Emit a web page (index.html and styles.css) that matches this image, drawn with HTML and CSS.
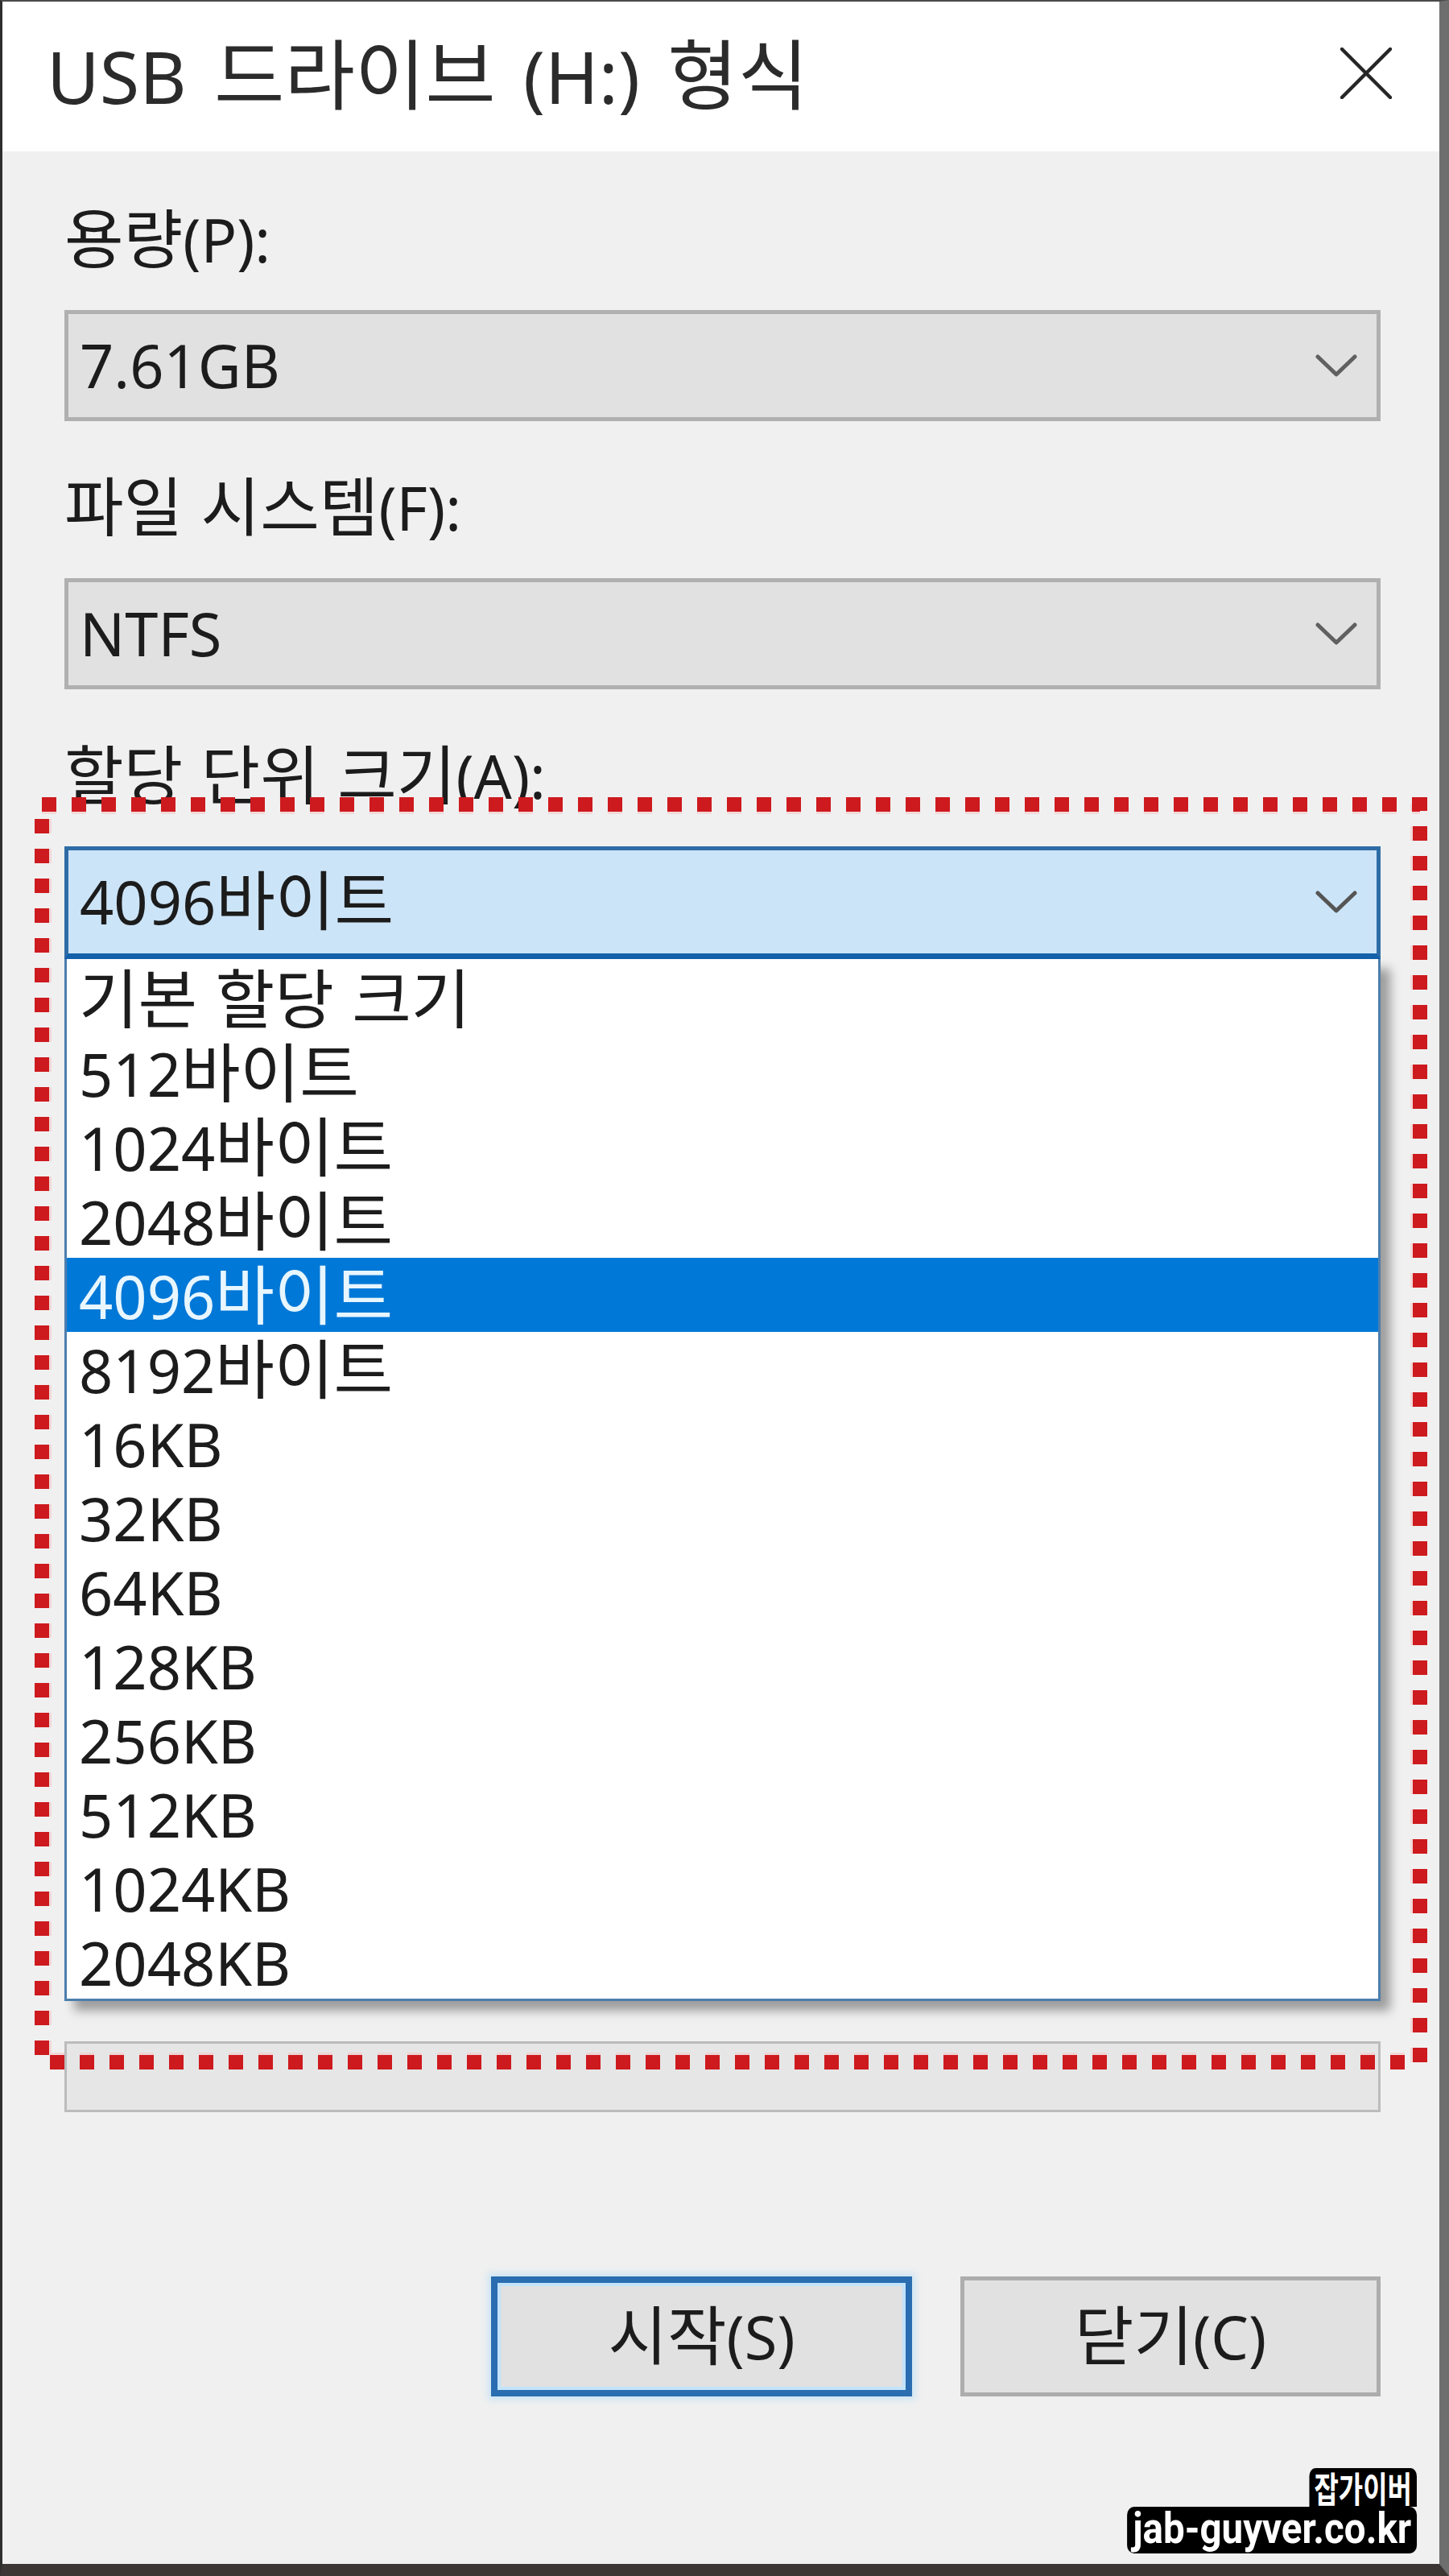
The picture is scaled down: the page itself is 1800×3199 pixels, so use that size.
FILE: index.html
```html
<!DOCTYPE html>
<html lang="ko">
<head>
<meta charset="utf-8">
<title>USB 드라이브 (H:) 형식</title>
<link rel="stylesheet" href="styles.css">
</head>
<body>
<div class="window">
  <header class="titlebar">
    <span class="title">USB <span class="ko">드라이브</span> (H:) <span class="ko">형식</span></span>
    <svg class="close" width="64" height="64" viewBox="0 0 64 64" aria-label="닫기"><path d="M2 2 L62 62 M62 2 L2 62" stroke="#262626" stroke-width="4.5" stroke-linecap="round" fill="none"/></svg>
  </header>
  <main class="content">
    <div class="label"><span class="ko">용량</span>(P):</div>
    <div class="combo">
      <span class="value">7.61GB</span>
      <svg class="chev" width="52" height="28" viewBox="0 0 52 28"><path d="M3 3 L26 25 L49 3" stroke="#606060" stroke-width="5" stroke-linecap="round" stroke-linejoin="round" fill="none"/></svg>
    </div>
    <div class="label"><span class="ko">파일 시스템</span>(F):</div>
    <div class="combo">
      <span class="value">NTFS</span>
      <svg class="chev" width="52" height="28" viewBox="0 0 52 28"><path d="M3 3 L26 25 L49 3" stroke="#606060" stroke-width="5" stroke-linecap="round" stroke-linejoin="round" fill="none"/></svg>
    </div>
    <div class="label"><span class="ko">할당 단위 크기</span>(A):</div>
    <div class="field-open">
      <div class="combo combo-focus">
        <span class="value">4096<span class="ko">바이트</span></span>
        <svg class="chev" width="52" height="28" viewBox="0 0 52 28"><path d="M3 3 L26 25 L49 3" stroke="#555555" stroke-width="5" stroke-linecap="round" stroke-linejoin="round" fill="none"/></svg>
      </div>
      <ul class="dropdown">
        <li><span class="ko">기본 할당 크기</span></li>
        <li>512<span class="ko">바이트</span></li>
        <li>1024<span class="ko">바이트</span></li>
        <li>2048<span class="ko">바이트</span></li>
        <li class="selected">4096<span class="ko">바이트</span></li>
        <li>8192<span class="ko">바이트</span></li>
        <li>16KB</li>
        <li>32KB</li>
        <li>64KB</li>
        <li>128KB</li>
        <li>256KB</li>
        <li>512KB</li>
        <li>1024KB</li>
        <li>2048KB</li>
      </ul>
    </div>
    <div class="progress"></div>
    <div class="buttons">
      <button class="btn btn-default"><span class="ko">시작</span>(S)</button>
      <button class="btn"><span class="ko">닫기</span>(C)</button>
    </div>
  </main>
</div>
<svg class="annotation" width="1730" height="1580" viewBox="0 0 1730 1580">
  <rect x="9" y="9" width="1712" height="1562" fill="none" stroke="#f3c2c2" stroke-width="24" stroke-dasharray="18 19" opacity="0.5"/>
  <rect x="9" y="9" width="1712" height="1562" fill="none" stroke="#cd1a1e" stroke-width="18" stroke-dasharray="18 19"/>
</svg>
<div class="watermark">
  <span class="wm-name">잡가이버</span>
  <span class="wm-url">jab-guyver.co.kr</span>
</div>
</body>
</html>
```
FILE: styles.css
```css
* { box-sizing: border-box; }
html, body { margin: 0; padding: 0; }
body {
  width: 1800px;
  height: 3199px;
  overflow: hidden;
  position: relative;
  background: #3a3a3a;
  font-family: "Noto Sans", "Noto Sans CJK KR", sans-serif;
}
.ko {
  font-family: "Noto Sans CJK KR", "Noto Sans", sans-serif;
  line-height: 0;
}
.window {
  width: 1800px;
  height: 3199px;
  border-style: solid;
  border-width: 2px 12px 15px 3px;
  border-color: #4a4a4a #6e6e6e #3b3533 #2e2e2e;
  background: #f0f0f0;
  display: flex;
  flex-direction: column;
}
.titlebar {
  height: 186px;
  flex: none;
  background: #ffffff;
  display: flex;
  align-items: center;
  justify-content: space-between;
  padding: 0 59px 2px 55px;
}
.title {
  font-size: 90px;
  line-height: 90px;
  word-spacing: 11px;
  color: #2b2b2b;
  white-space: nowrap;
}
.title .ko { font-size: 95px; }
.close { display: block; margin-bottom: 6px; }
.content {
  padding: 60px 73px 0 77px;
  color: #1c1c1c;
  font-size: 74px;
}
.content .ko { font-size: 80px; }
.label {
  height: 100px;
  line-height: 100px;
  margin-bottom: 37px;
  white-space: nowrap;
}
.combo {
  height: 138px;
  border: 5px solid #b0b0b0;
  background: #e1e1e1;
  display: flex;
  align-items: center;
  justify-content: space-between;
  padding: 0 24px 0 14px;
  margin-bottom: 58px;
  line-height: 90px;
  white-space: nowrap;
}
.chev { display: block; flex: none; }
.combo-focus {
  height: 140px;
  border-color: #2f6ca6;
  border-bottom: 7px solid #1461ab;
  background: #cce4f7;
  margin-bottom: 0;
}
.field-open { position: relative; }
.dropdown {
  position: absolute;
  top: 100%;
  left: 0;
  right: 0;
  margin: 0;
  padding: 3px 0 0 0;
  list-style: none;
  background: #ffffff;
  border: 3px solid #4d7eae;
  border-top: 0;
  box-shadow: 12px 12px 12px rgba(0, 0, 0, 0.35);
  z-index: 2;
}
.dropdown li {
  height: 92px;
  line-height: 92px;
  padding: 2px 0 0 15px;
  white-space: nowrap;
  color: #1c1c1c;
}
.dropdown li.selected {
  background: #0078d7;
  color: #e8f6ff;
}
.progress {
  margin-top: 1344px;
  height: 88px;
  background: #e6e6e6;
  border: 3px solid #bcbcbc;
}
.buttons {
  margin-top: 204px;
  display: flex;
  justify-content: flex-end;
  gap: 60px;
}
.btn {
  width: 522px;
  height: 149px;
  font: inherit;
  font-size: 74px;
  line-height: 90px;
  color: #1c1c1c;
  background: #e1e1e1;
  border: 5px solid #adadad;
  padding: 0;
  margin: 0;
}
.btn-default {
  width: 523px;
  border: 8px solid #2a6db0;
  box-shadow: inset 0 0 0 4px #c2e3fa, 0 0 8px 4px rgba(160, 215, 250, 0.45);
}
.annotation {
  position: absolute;
  left: 43px;
  top: 990px;
  z-index: 5;
  pointer-events: none;
}
.watermark {
  position: absolute;
  right: 40px;
  bottom: 28px;
  display: flex;
  flex-direction: column;
  align-items: flex-end;
  z-index: 6;
  font-weight: 700;
  color: #ffffff;
  line-height: 1;
}
.wm-name {
  display: inline-block;
  font-family: "Noto Sans CJK KR", sans-serif;
  font-size: 44px;
  background: #000000;
  padding: 2px 8px 2px 8px;
  border-radius: 10px 10px 0 0;
  transform: scaleX(0.75);
  transform-origin: right center;
}
.wm-url {
  display: inline-block;
  font-family: Roboto, "Noto Sans", sans-serif;
  font-size: 54px;
  background: #000000;
  padding: 0 8px 4px 8px;
  border-radius: 10px;
  transform: scaleX(0.88);
  transform-origin: right center;
}
```
